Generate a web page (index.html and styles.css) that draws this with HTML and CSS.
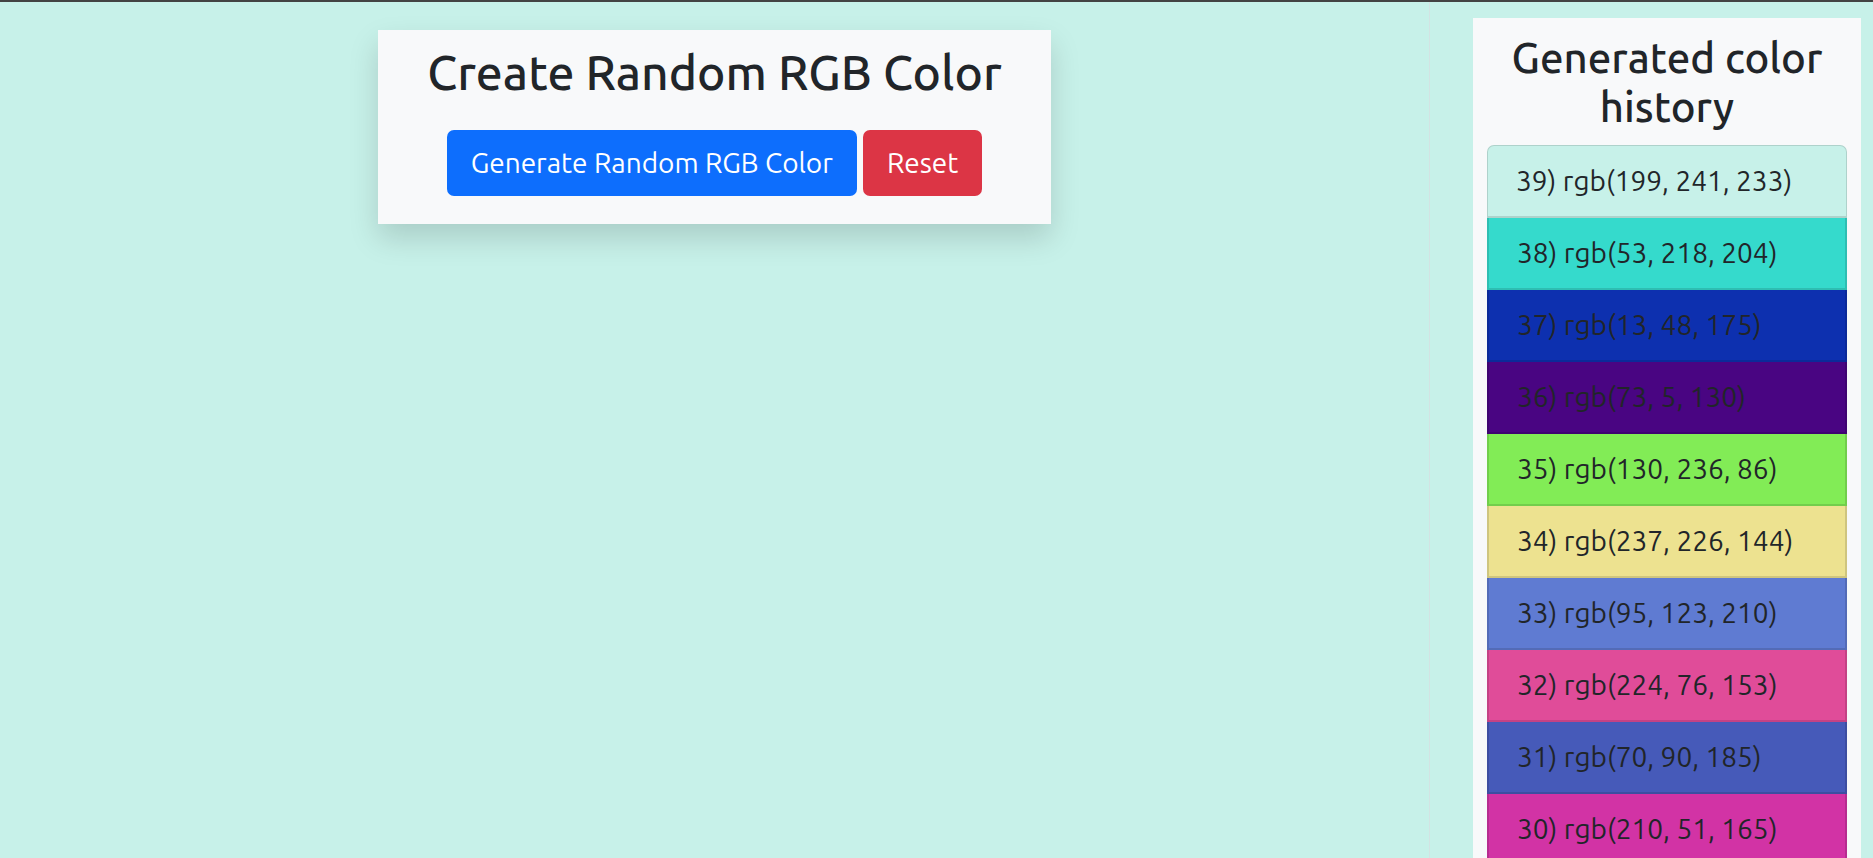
FILE: index.html
```
<!DOCTYPE html>
<html lang="en">
<head>
<meta charset="utf-8">
<meta name="viewport" content="width=device-width, initial-scale=1">
<title>Random RGB Color</title>
<link rel="stylesheet" href="styles.css">
</head>
<body>
<div class="layout">
  <main class="stage">
    <section class="generator">
      <h1 class="generator-title">Create Random RGB Color</h1>
      <div class="actions">
        <button type="button" class="btn btn-primary">Generate Random RGB Color</button>
        <button type="button" class="btn btn-danger">Reset</button>
      </div>
    </section>
  </main>
  <aside class="sidebar">
    <section class="history">
      <h2 class="history-title">Generated color history</h2>
      <ul class="history-list">
        <li class="history-item" style="background-color: rgb(199, 241, 233)">39) rgb(199, 241, 233)</li>
        <li class="history-item" style="background-color: rgb(53, 218, 204)">38) rgb(53, 218, 204)</li>
        <li class="history-item" style="background-color: rgb(13, 48, 175)">37) rgb(13, 48, 175)</li>
        <li class="history-item" style="background-color: rgb(73, 5, 130)">36) rgb(73, 5, 130)</li>
        <li class="history-item" style="background-color: rgb(130, 236, 86)">35) rgb(130, 236, 86)</li>
        <li class="history-item" style="background-color: rgb(237, 226, 144)">34) rgb(237, 226, 144)</li>
        <li class="history-item" style="background-color: rgb(95, 123, 210)">33) rgb(95, 123, 210)</li>
        <li class="history-item" style="background-color: rgb(224, 76, 153)">32) rgb(224, 76, 153)</li>
        <li class="history-item" style="background-color: rgb(70, 90, 185)">31) rgb(70, 90, 185)</li>
        <li class="history-item" style="background-color: rgb(210, 51, 165)">30) rgb(210, 51, 165)</li>
      </ul>
    </section>
  </aside>
</div>
</body>
</html>
```
FILE: styles.css
```
* { box-sizing: border-box; }
body {
  margin: 0;
  background: rgb(199, 241, 233);
  color: #212529;
  font-family: Ubuntu, "Noto Sans", sans-serif;
  font-size: 28px;
  line-height: 42px;
}
.layout {
  display: grid;
  grid-template-columns: minmax(0, 1fr) 444px;
  height: 100vh;
  overflow: hidden;
  border-top: 2px solid #434343;
}
.stage {
  display: flex;
  justify-content: center;
  align-items: flex-start;
  padding-top: 28px;
}
.generator {
  padding: 14px 49px 28px;
  background: #f8f9fa;
  box-shadow: 0 14px 28px rgba(0, 0, 0, 0.15);
  text-align: center;
}
.generator-title {
  margin: 0 0 30px;
  font-size: 48px;
  font-weight: 500;
  line-height: 56px;
}
.actions {
  display: flex;
  justify-content: center;
  gap: 6px;
}
.btn {
  padding: 12px 24px;
  border: 0;
  border-radius: 7px;
  color: #fff;
  font: inherit;
  cursor: pointer;
}
.btn-primary { background: #0d6efd; }
.btn-danger { background: #dc3545; }
.sidebar {
  padding: 16px 12px 0 43px;
  border-left: 1px solid #d3e3e3;
}
.history {
  padding: 15px 14px;
  background: #f8f9fa;
}
.history-title {
  margin: 0 0 14px;
  font-size: 42px;
  font-weight: 500;
  line-height: 49px;
  text-align: center;
}
.history-list {
  margin: 0;
  padding: 0;
  list-style: none;
}
.history-item {
  padding: 14px 28px;
  border: 2px solid rgba(0, 0, 0, 0.125);
  border-top-width: 0;
}
.history-item:first-child {
  border-width: 1px 1px 2px;
  border-radius: 7px 7px 0 0;
}
```
